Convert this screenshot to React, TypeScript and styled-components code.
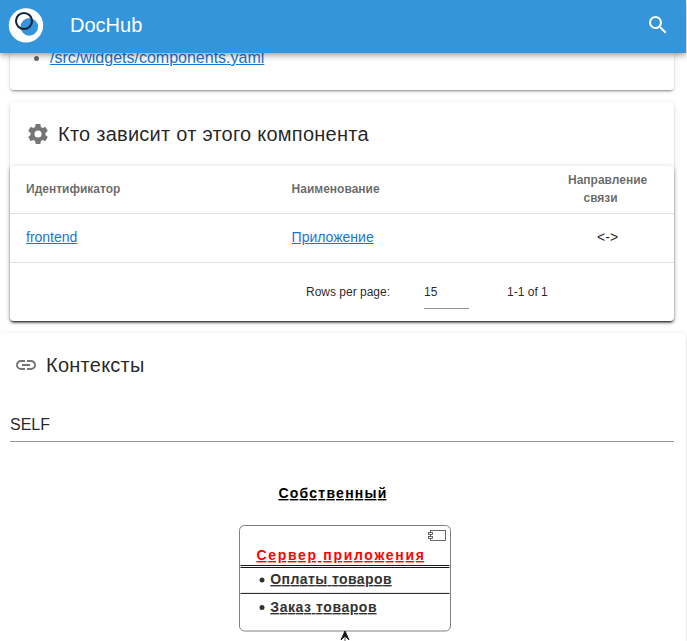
import React from "react";
import styled, { createGlobalStyle } from "styled-components";

const GlobalStyle = createGlobalStyle`
  *, *::before, *::after { box-sizing: border-box; }
  html, body { margin: 0; background: #fff; overflow: hidden; }
  body {
    font-family: "Liberation Sans", Arial, sans-serif;
    font-size: 16px;
    line-height: 1.5;
    color: rgba(0, 0, 0, 0.87);
  }
`;

const elevation = `
  0 3px 1px -2px rgba(0, 0, 0, 0.2),
  0 2px 2px 0 rgba(0, 0, 0, 0.14),
  0 1px 5px 0 rgba(0, 0, 0, 0.12)`;

const Page = styled.div`
  width: 687px;
  height: 641px;
  padding-right: 1px;
  overflow: hidden;
  display: flex;
  flex-direction: column;
`;

const AppBar = styled.header`
  position: relative;
  z-index: 2;
  flex: none;
  height: 53px;
  padding: 0 16px 3px 8px;
  display: flex;
  align-items: center;
  background: #3495db;
  color: #fff;
  box-shadow:
    0 2px 4px -1px rgba(0, 0, 0, 0.2),
    0 4px 5px 0 rgba(0, 0, 0, 0.14),
    0 1px 10px 0 rgba(0, 0, 0, 0.12);
`;

const Logo = styled.svg`
  flex: none;
  width: 36px;
  height: 36px;
`;

const BarTitle = styled.div`
  flex: 1;
  margin-left: 26px;
  font-size: 20px;
  line-height: 30px;
`;

const Icon = styled.svg<{ $color?: string }>`
  flex: none;
  width: 24px;
  height: 24px;
  fill: ${(p) => p.$color ?? "rgba(0, 0, 0, 0.54)"};
`;

const Card = styled.section<{ $wide?: boolean }>`
  flex: none;
  margin: ${(p) => (p.$wide ? "0" : "0 12px 12px 10px")};
  border-radius: 4px;
  background: #fff;
  box-shadow: ${elevation};
`;

const LinksCard = styled(Card)`
  height: 37px;
  border-radius: 0 0 4px 4px;
`;

const LinkList = styled.ul`
  margin: 0;
  padding-left: 40px;
  color: rgba(0, 0, 0, 0.6);
  line-height: 22px;

  li { margin-top: -6px; }
  li::marker { color: rgba(0, 0, 0, 0.6); }
`;

const LinksBody = styled.div`
  display: flow-root;
`;

const Link = styled.a`
  color: #1976d2;
  text-decoration: underline;
`;

const CardTitle = styled.h2<{ $inset: number }>`
  height: 64px;
  margin: 0;
  padding-left: ${(p) => p.$inset}px;
  display: flex;
  align-items: center;
  gap: 8px;
  font-size: 20px;
  font-weight: 400;
  line-height: 32px;
  letter-spacing: 0.25px;
`;

const TableCard = styled.div`
  height: 155px;
  border-radius: 4px;
  background: #fff;
  box-shadow: ${elevation}, ${elevation};
`;

const Table = styled.table`
  width: 100%;
  table-layout: fixed;
  border-collapse: separate;
  border-spacing: 0;
`;

const HeadCell = styled.th<{ $width: string; $center?: boolean }>`
  width: ${(p) => p.$width};
  height: 48px;
  padding: 0 16px 2px;
  border-bottom: 1px solid rgba(0, 0, 0, 0.12);
  text-align: ${(p) => (p.$center ? "center" : "left")};
  font-size: 12px;
  font-weight: 700;
  line-height: 18px;
  color: rgba(0, 0, 0, 0.6);
`;

const SortSpace = styled.span`
  display: inline-block;
  width: 14px;
`;

const Cell = styled.td<{ $center?: boolean }>`
  height: 49px;
  padding: 0 16px 2px;
  border-bottom: 1px solid rgba(0, 0, 0, 0.12);
  text-align: ${(p) => (p.$center ? "center" : "left")};
  font-size: 14px;
  line-height: 21px;
`;

const Footer = styled.div`
  height: 58px;
  padding-left: 296px;
  display: flex;
  align-items: center;
  font-size: 12px;
  line-height: 18px;
`;

const PageSize = styled.div`
  width: 45px;
  height: 34px;
  margin: 12px 38px 0 34px;
  padding-top: 8px;
  align-self: flex-start;
  border-bottom: 1px solid rgba(0, 0, 0, 0.42);
`;

const Select = styled.div`
  height: 32px;
  margin: 13px 12px 0 10px;
  padding-top: 5px;
  border-bottom: 1px solid rgba(0, 0, 0, 0.42);
  font-size: 16px;
  line-height: 20px;
`;

const ContextCard = styled(Card)`
  flex: 1 0 auto;
  border-radius: 4px 4px 0 0;
`;

const Diagram = styled.svg`
  display: block;
  width: 686px;
  height: 199px;
  font-family: "Liberation Sans", Arial, sans-serif;
  font-size: 14px;
  font-weight: 700;
`;

const Label = styled.text<{ $color: string }>`
  fill: ${(p) => p.$color};
  text-decoration: underline;
`;

const COG =
  "M12,15.5A3.5,3.5 0 0,1 8.5,12A3.5,3.5 0 0,1 12,8.5A3.5,3.5 0 0,1 15.5,12A3.5,3.5 0 0,1 12,15.5M19.43,12.97C19.47,12.65 19.5,12.33 19.5,12C19.5,11.67 19.47,11.34 19.43,11L21.54,9.37C21.73,9.22 21.78,8.95 21.66,8.73L19.66,5.27C19.54,5.05 19.27,4.96 19.05,5.05L16.56,6.05C16.04,5.66 15.5,5.32 14.87,5.07L14.5,2.42C14.46,2.18 14.25,2 14,2H10C9.75,2 9.54,2.18 9.5,2.42L9.13,5.07C8.5,5.32 7.96,5.66 7.44,6.05L4.95,5.05C4.73,4.96 4.46,5.05 4.34,5.27L2.34,8.73C2.21,8.95 2.27,9.22 2.46,9.37L4.57,11C4.53,11.34 4.5,11.67 4.5,12C4.5,12.33 4.53,12.65 4.57,12.97L2.46,14.63C2.27,14.78 2.21,15.05 2.34,15.27L4.34,18.73C4.46,18.95 4.73,19.03 4.95,18.95L7.44,17.94C7.96,18.34 8.5,18.68 9.13,18.93L9.5,21.58C9.54,21.82 9.75,22 10,22H14C14.25,22 14.46,21.82 14.5,21.58L14.87,18.93C15.5,18.67 16.04,18.34 16.56,17.94L19.05,18.95C19.27,19.03 19.54,18.95 19.66,18.73L21.66,15.27C21.78,15.05 21.73,14.78 21.54,14.63L19.43,12.97Z";
const LINK =
  "M3.9,12C3.9,10.29 5.29,8.9 7,8.9H11V7H7A5,5 0 0,0 2,12A5,5 0 0,0 7,17H11V15.1H7C5.29,15.1 3.9,13.71 3.9,12M8,13H16V11H8V13M17,7H13V8.9H17C18.71,8.9 20.1,10.29 20.1,12C20.1,13.71 18.71,15.1 17,15.1H13V17H17A5,5 0 0,0 22,12A5,5 0 0,0 17,7Z";
const MAGNIFY =
  "M9.5,3A6.5,6.5 0 0,1 16,9.5C16,11.11 15.41,12.59 14.44,13.73L14.71,14H15.5L20.5,19L19,20.5L14,15.5V14.71L13.73,14.44C12.59,15.41 11.11,16 9.5,16A6.5,6.5 0 0,1 3,9.5A6.5,6.5 0 0,1 9.5,3M9.5,5C7,5 5,7 5,9.5C5,12 7,14 9.5,14C12,14 14,12 14,9.5C14,7 12,5 9.5,5Z";

function MdiIcon({ path, color }: { path: string; color?: string }) {
  return (
    <Icon viewBox="0 0 24 24" $color={color}>
      <path d={path} />
    </Icon>
  );
}

function ContextDiagram() {
  return (
    <Diagram viewBox="0 442 686 199">
      <Label x="278.4" y="498" textLength="108" $color="#000">Собственный</Label>
      <rect x="239.5" y="525.5" width="211" height="105.5" rx="5" fill="#fff" stroke="#808080" />
      <g fill="#fff" stroke="#444" strokeWidth="0.8">
        <rect x="430.5" y="530.5" width="15" height="10" />
        <rect x="428.5" y="532.5" width="4" height="2" />
        <rect x="428.5" y="536.5" width="4" height="2" />
      </g>
      <Label x="256.4" y="560" textLength="167.5" $color="#f00">Сервер приложения</Label>
      <g stroke="#181818">
        <path d="M240.5 565.5H449.5M240.5 567.5H449.5" />
        <path d="M240.5 593.4H449.5" />
      </g>
      <circle cx="262" cy="580" r="2.5" fill="#333" />
      <Label x="270.3" y="584" textLength="121.3" $color="#333">Оплаты товаров</Label>
      <circle cx="262" cy="607.5" r="2.5" fill="#333" />
      <Label x="270.3" y="612" textLength="106.3" $color="#333">Заказ товаров</Label>
      <path d="M345 634V642" stroke="#555" />
      <path d="M345 631L341 640L345 636L349 640Z" fill="#181818" stroke="#181818" />
    </Diagram>
  );
}

export default function App() {
  return (
    <>
      <GlobalStyle />
      <Page>
        <AppBar>
          <Logo viewBox="0 0 36 36">
            <circle cx="18" cy="18.4" r="17.2" fill="#fff" />
            <circle cx="21.3" cy="19.9" r="8.8" fill="#3495db" />
            <circle cx="16" cy="14" r="8" fill="none" stroke="#14243d" strokeWidth="2.1" />
          </Logo>
          <BarTitle>DocHub</BarTitle>
          <MdiIcon path={MAGNIFY} color="#fff" />
        </AppBar>

        <LinksCard>
          <LinksBody>
            <LinkList>
              <li><Link>/src/widgets/components.yaml</Link></li>
            </LinkList>
          </LinksBody>
        </LinksCard>

        <Card>
          <CardTitle $inset={16}>
            <MdiIcon path={COG} />
            Кто зависит от этого компонента
          </CardTitle>
          <TableCard>
            <Table>
              <thead>
                <tr>
                  <HeadCell $width="40%">Идентификатор</HeadCell>
                  <HeadCell $width="40%">Наименование</HeadCell>
                  <HeadCell $width="20%" $center>Направление связи<SortSpace /></HeadCell>
                </tr>
              </thead>
              <tbody>
                <tr>
                  <Cell><Link>frontend</Link></Cell>
                  <Cell><Link>Приложение</Link></Cell>
                  <Cell $center>&lt;-&gt;</Cell>
                </tr>
              </tbody>
            </Table>
            <Footer>
              <span>Rows per page:</span>
              <PageSize>15</PageSize>
              <span>1-1 of 1</span>
            </Footer>
          </TableCard>
        </Card>

        <ContextCard $wide>
          <CardTitle $inset={14}>
            <MdiIcon path={LINK} />
            Контексты
          </CardTitle>
          <Select>SELF</Select>
          <ContextDiagram />
        </ContextCard>
      </Page>
    </>
  );
}
